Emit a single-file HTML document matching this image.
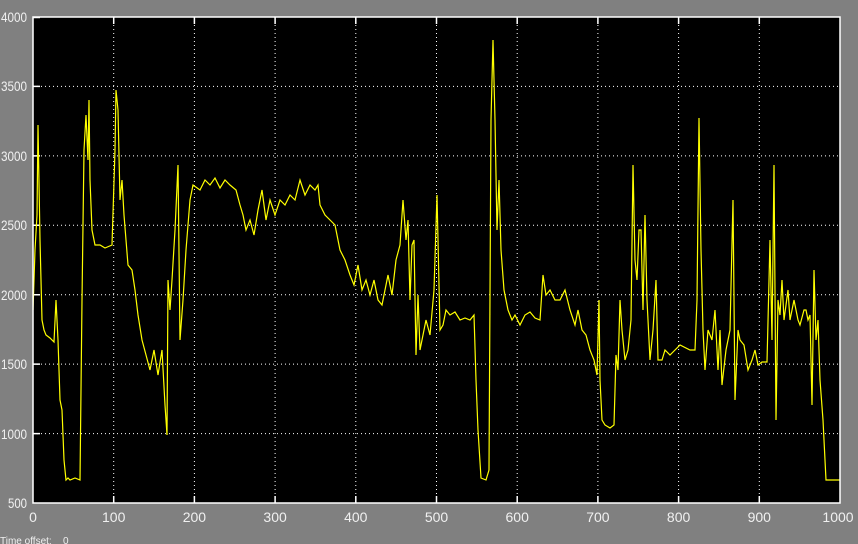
<!DOCTYPE html>
<html><head><meta charset="utf-8"><style>
html,body{margin:0;padding:0;background:#808080;width:858px;height:544px;overflow:hidden}
svg{display:block}
text{font-family:"Liberation Sans",sans-serif;fill:#f0f0f0}
</style></head><body>
<svg width="858" height="544" viewBox="0 0 858 544">
<rect x="0" y="0" width="858" height="544" fill="#808080"/>
<rect x="33" y="17" width="807" height="486" fill="#000"/>
<g stroke="#fff" stroke-width="1" stroke-dasharray="1,3" fill="none">
<path d="M113.7,17V503M194.4,17V503M275.1,17V503M355.8,17V503M436.5,17V503M517.2,17V503M597.9,17V503M678.6,17V503M759.3,17V503"/>
<path d="M33,86.4H840M33,155.9H840M33,225.3H840M33,294.7H840M33,364.1H840M33,433.6H840"/>
</g>
<g stroke="#fff" stroke-width="1.5">
<path d="M33,17.5H40M33,86.4H40M33,155.9H40M33,225.3H40M33,294.7H40M33,364.1H40M33,433.6H40"/>
<path d="M113.7,503V496M194.4,503V496M275.1,503V496M355.8,503V496M436.5,503V496M517.2,503V496M597.9,503V496M678.6,503V496M759.3,503V496"/>
<path d="M113.7,17V24M194.4,17V24M275.1,17V24M355.8,17V24M436.5,17V24M517.2,17V24M597.9,17V24M678.6,17V24M759.3,17V24"/>
</g>
<polyline fill="none" stroke="#ffff00" stroke-width="1.2" points="33,310 35,250 37,215 38,125 40,240 42,320 44,330 46,335 50,338 54,342 56,300 58,340 60,400 62,410 64,460 66,480 68,478 70,480 75,478 80,480 82,300 84,150 86,115 88,160 89,100 90,180 92,230 95,245 100,245 105,248 112,245 115,150 116,90 118,110 120,200 122,180 124,215 126,240 128,265 132,270 135,290 138,315 142,340 146,355 150,370 154,350 158,375 162,350 165,405 167,435 168,280 170,310 172,280 175,230 178,165 180,340 183,300 186,250 190,200 193,185 200,190 205,180 210,185 215,178 220,188 225,180 230,185 236,190 240,205 243,215 246,230 250,220 254,235 258,210 262,190 266,220 270,200 275,215 280,200 285,205 290,195 295,200 300,180 305,195 310,185 315,190 318,185 320,205 325,215 330,220 335,225 340,250 345,260 350,275 354,285 358,265 362,290 366,280 370,295 374,280 378,300 382,305 385,290 388,275 392,295 396,260 400,245 403,200 406,240 408,220 410,300 412,245 414,240 416,355 418,295 420,350 423,335 426,320 430,335 434,290 437,195 440,330 443,325 446,310 450,315 455,312 460,320 465,318 470,320 474,315 476,380 478,430 481,478 486,480 489,470 491,120 493,40 495,120 497,230 499,180 501,250 504,290 508,310 512,320 515,315 520,325 525,315 530,312 535,318 540,320 543,275 546,295 550,290 555,300 560,300 565,290 570,310 575,325 578,310 582,330 586,335 590,350 594,360 597,375 599,300 600,380 602,420 605,425 610,428 614,425 616,355 618,370 620,300 622,330 625,360 628,350 631,320 633,165 635,260 637,280 639,230 641,230 643,310 645,215 647,300 650,360 653,330 656,280 658,360 662,360 665,350 670,355 675,350 680,345 690,350 695,350 697,300 699,118 701,250 703,330 705,370 708,330 712,340 715,310 718,370 720,330 722,385 726,350 730,330 733,200 735,400 738,330 740,340 744,345 748,370 752,360 755,350 758,365 762,362 767,362 770,240 772,340 774,165 776,420 778,300 780,315 782,280 784,320 788,290 790,320 794,300 798,320 800,325 804,310 806,310 808,320 810,315 812,405 814,270 816,340 818,320 820,380 823,420 826,480 840,480"/>
<rect x="33" y="17" width="807" height="486" fill="none" stroke="#fff" stroke-width="1.5"/>
<g font-size="14">
<text x="1" y="22" textLength="26" lengthAdjust="spacingAndGlyphs">4000</text>
<text x="1" y="91" textLength="26" lengthAdjust="spacingAndGlyphs">3500</text>
<text x="1" y="161" textLength="26" lengthAdjust="spacingAndGlyphs">3000</text>
<text x="1" y="230" textLength="26" lengthAdjust="spacingAndGlyphs">2500</text>
<text x="1" y="300" textLength="26" lengthAdjust="spacingAndGlyphs">2000</text>
<text x="1" y="369" textLength="26" lengthAdjust="spacingAndGlyphs">1500</text>
<text x="1" y="439" textLength="26" lengthAdjust="spacingAndGlyphs">1000</text>
<text x="8" y="508" textLength="19" lengthAdjust="spacingAndGlyphs">500</text>
</g>
<g font-size="14" text-anchor="middle">
<text x="33" y="522">0</text><text x="113.7" y="522">100</text><text x="194.4" y="522">200</text><text x="275.1" y="522">300</text><text x="355.8" y="522">400</text><text x="436.5" y="522">500</text><text x="517.2" y="522">600</text><text x="597.9" y="522">700</text><text x="678.6" y="522">800</text><text x="759.3" y="522">900</text><text x="838" y="522">1000</text>
</g>
<text x="0" y="544" font-size="10">Time offset:</text><text x="63" y="544" font-size="10">0</text>
</svg>
</body></html>
